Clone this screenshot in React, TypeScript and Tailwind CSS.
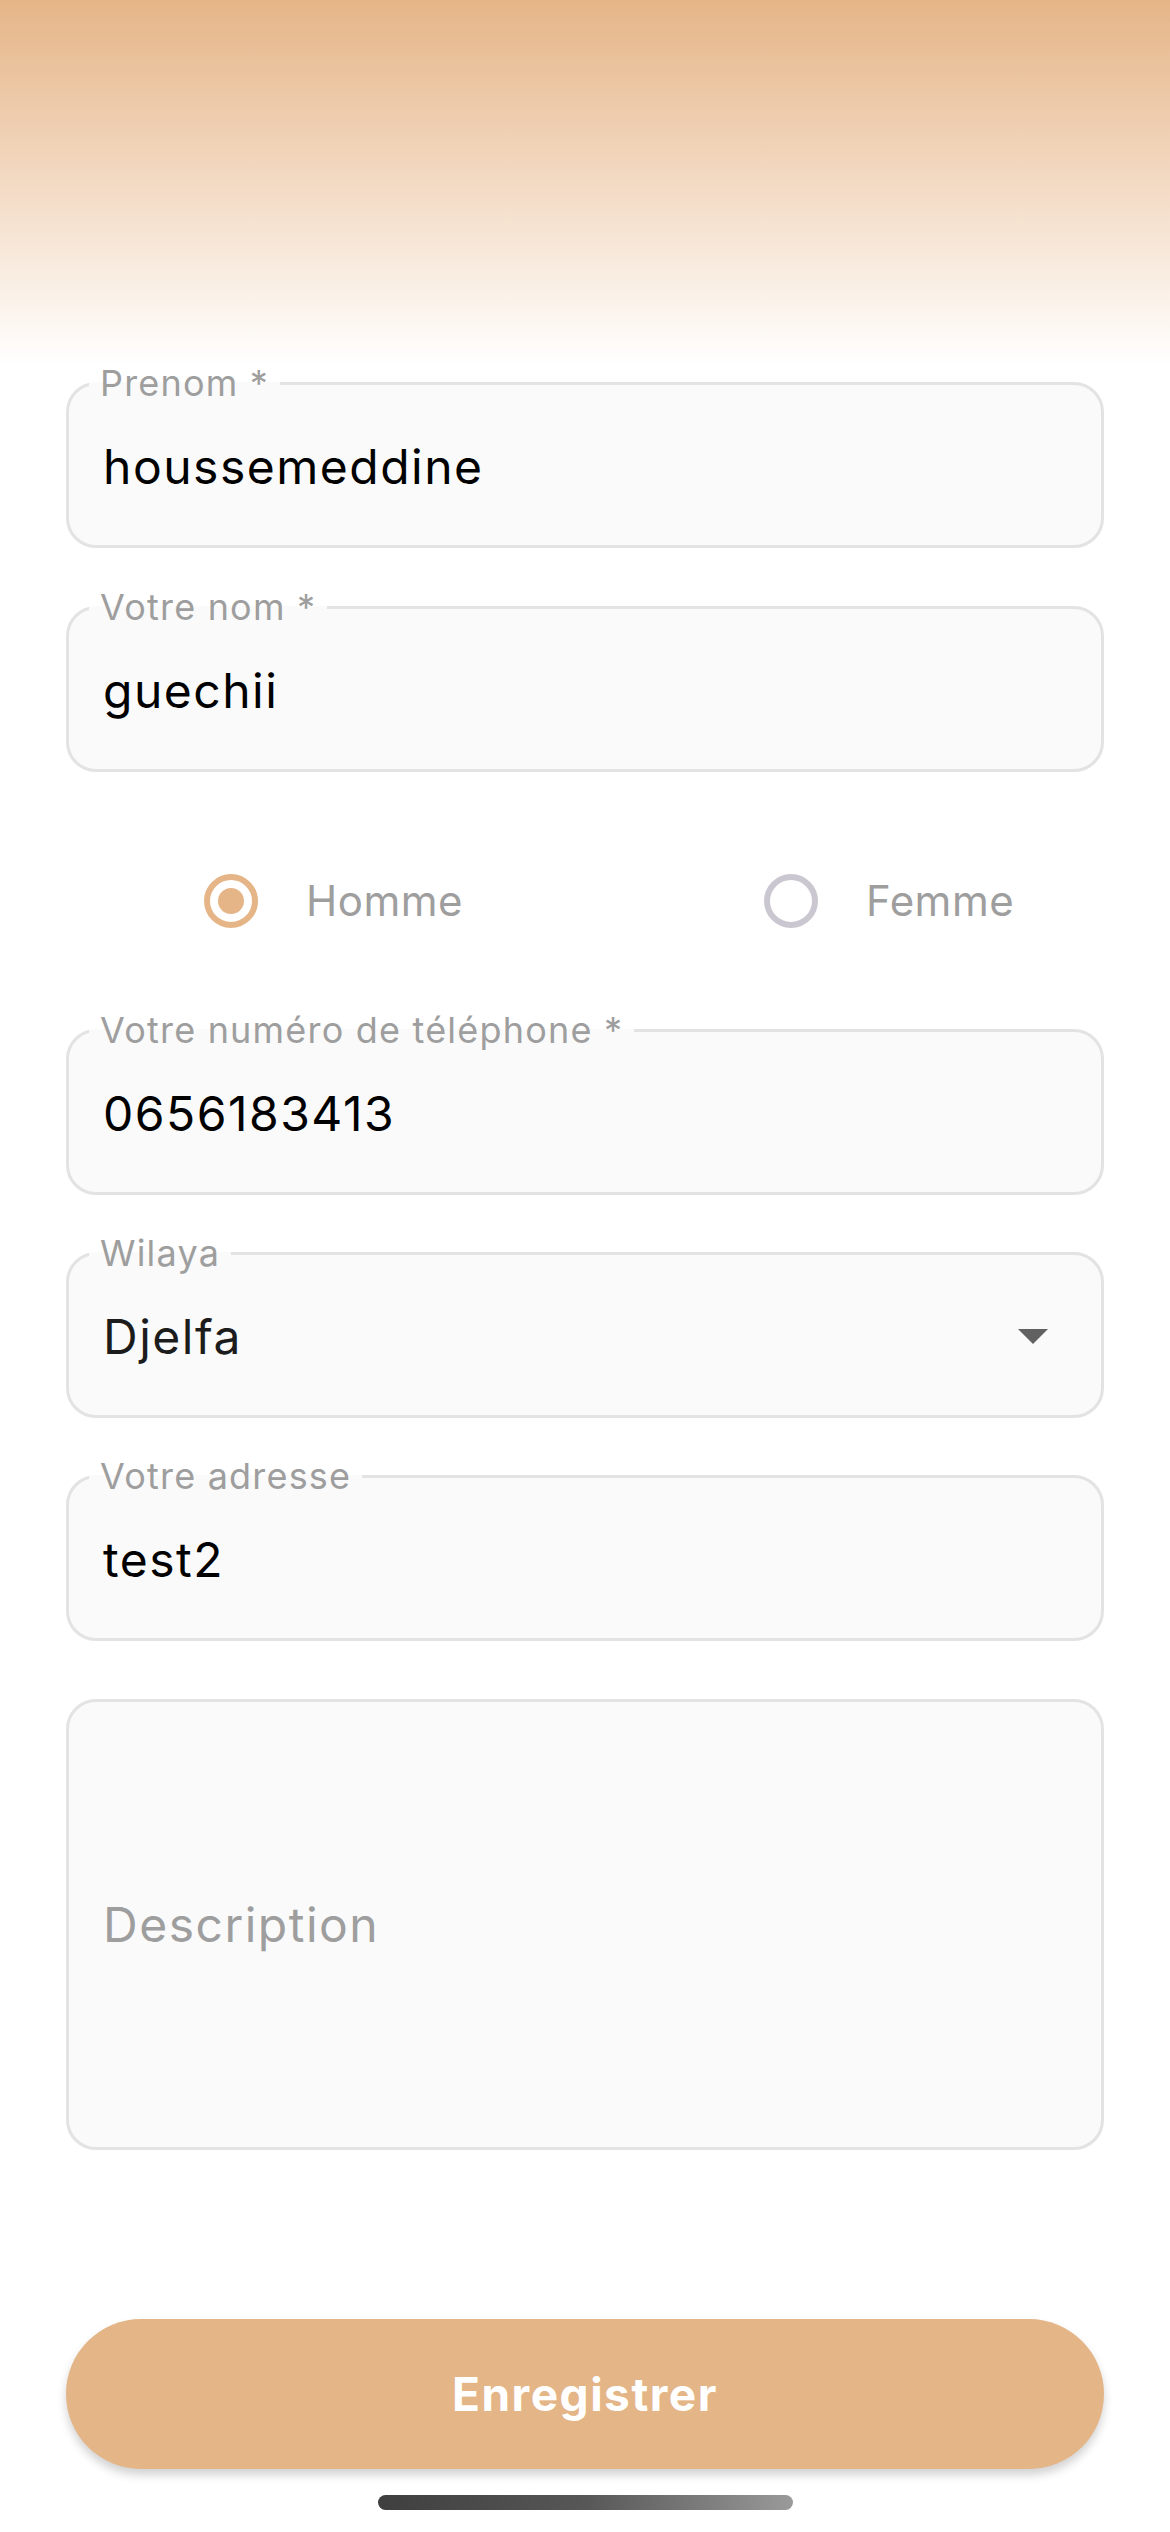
import React, { useState } from "react";

type FieldProps = {
  label: string;
  value: string;
  select?: boolean;
};

function OutlinedField({ label, value, select }: FieldProps) {
  return (
    <fieldset className="rounded-[30px] border-[3px] border-[#e3e3e3] bg-[#fafafa] px-0 pb-0 m-0 min-w-0">
      <legend className="ml-[20px] px-[11px] text-[36px] leading-none tracking-[1.2px] text-[#9e9e9e]">
        {label}
      </legend>
      <div className="flex h-[144px] items-start pl-[34px] pr-[53px] pt-[30px]">
        <span
          className={`flex-1 text-[48px] leading-normal tracking-[1.5px] ${
            select ? "text-[#1c1c1c]" : "text-black"
          }`}
        >
          {value}
        </span>
        {select && (
          <svg width="30" height="15" viewBox="0 0 30 15" className="mt-[28px]">
            <path d="M0 0 L30 0 L15 15 Z" fill="#616161" />
          </svg>
        )}
      </div>
    </fieldset>
  );
}

function Radio({ checked }: { checked: boolean }) {
  return (
    <div
      className={`flex h-[54px] w-[54px] items-center justify-center rounded-full border-[6px] ${
        checked ? "border-[#e5b587]" : "border-[#cac7d1]"
      }`}
    >
      {checked && <div className="h-[26px] w-[26px] rounded-full bg-[#e5b587]" />}
    </div>
  );
}

export default function App() {
  const [gender, setGender] = useState<"homme" | "femme">("homme");

  return (
    <div
      className="min-h-[2532px] w-[1170px] bg-white"
      style={{ fontFamily: "Inter, 'Noto Sans', sans-serif" }}
    >
      <div className="h-[365px] bg-gradient-to-b from-[#e5b587] to-white" />

      <div className="flex flex-col px-[66px]">
        <OutlinedField label="Prenom *" value="houssemeddine" />
        <div className="mt-[41px]">
          <OutlinedField label="Votre nom *" value="guechii" />
        </div>

        <div className="mt-[97px] mb-[83px] grid h-[60px] grid-cols-2">
          <button
            onClick={() => setGender("homme")}
            className="flex items-center gap-[48px] pl-[138px]"
          >
            <Radio checked={gender === "homme"} />
            <span className="text-[42px] tracking-[0.5px] text-[#9e9e9e]">Homme</span>
          </button>
          <button
            onClick={() => setGender("femme")}
            className="flex items-center gap-[48px] pl-[179px]"
          >
            <Radio checked={gender === "femme"} />
            <span className="text-[42px] tracking-[0.5px] text-[#9e9e9e]">Femme</span>
          </button>
        </div>

        <OutlinedField label="Votre numéro de téléphone *" value="0656183413" />
        <div className="mt-[40px]">
          <OutlinedField label="Wilaya" value="Djelfa" select />
        </div>
        <div className="mt-[40px]">
          <OutlinedField label="Votre adresse" value="test2" />
        </div>

        <div className="mt-[58px] flex h-[451px] items-center rounded-[30px] border-[3px] border-[#e3e3e3] bg-[#fafafa] pl-[34px]">
          <span className="text-[48px] tracking-[1.5px] text-[#9e9e9e]">Description</span>
        </div>

        <button className="mt-[169px] flex h-[150px] items-center justify-center rounded-full bg-[#e4b587] shadow-[0_6px_10px_rgba(0,0,0,0.18)]">
          <span className="text-[46px] font-bold tracking-[1.5px] text-white">Enregistrer</span>
        </button>
      </div>

      <div className="mt-[26px] flex justify-center">
        <div className="h-[15px] w-[415px] rounded-full bg-gradient-to-r from-[#3f3f3f] via-[#575757] to-[#9a9a9a]" />
      </div>
    </div>
  );
}
